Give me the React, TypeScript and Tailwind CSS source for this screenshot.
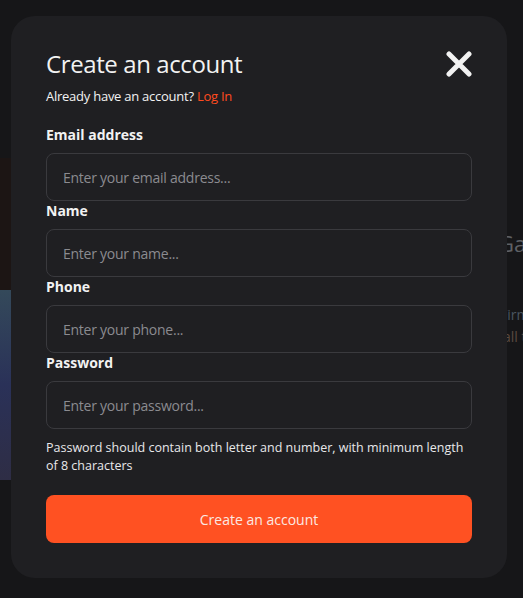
import React from 'react';

const fields = [
  { label: 'Email address', placeholder: 'Enter your email address...', type: 'email' },
  { label: 'Name', placeholder: 'Enter your name...', type: 'text' },
  { label: 'Phone', placeholder: 'Enter your phone...', type: 'tel' },
  { label: 'Password', placeholder: 'Enter your password...', type: 'password' },
];

function CloseIcon() {
  return (
    <svg width="26" height="26" viewBox="0 0 26 26" fill="none">
      <path d="M3 3L23 23M23 3L3 23" stroke="#f2f2f2" strokeWidth="5" strokeLinecap="round" />
    </svg>
  );
}

export default function App() {
  return (
    <div
      className="relative h-[598px] w-[523px] overflow-hidden bg-[#161618]"
      style={{ fontFamily: '"Open Sans", "Noto Sans", sans-serif' }}
    >
      {/* page behind the dialog */}
      <div className="flex pt-[158px]">
        <div className="flex w-[260px] shrink-0 flex-col">
          <div className="h-[132px] bg-[#1c1514]" />
          <div className="h-[190px] bg-gradient-to-b from-[#34495a] via-[#2a3158] to-[#2e2d45]" />
        </div>
        <div className="ml-[238px] flex shrink-0 flex-col pt-[70px]">
          <div className="whitespace-nowrap text-[22px] leading-[30px] text-[#5e6065]">Gaming</div>
          <div className="mt-[46px] whitespace-nowrap pl-[2px] text-[14px] leading-[22px] text-[#4a5560]">Firm platform</div>
          <div className="whitespace-nowrap pl-[5px] text-[14px] leading-[22px] text-[#5a4a40]">all the best</div>
        </div>
      </div>

      {/* dialog */}
      <div className="absolute left-[11px] top-[16px] w-[496px] rounded-[24px] bg-[#1f1f22] px-[35px] pb-[35px] pt-[32px]">
        <div className="flex items-start justify-between">
          <h1 className="text-[24px] leading-[32px] tracking-[-0.4px] text-[#f2f2f2]">Create an account</h1>
          <button className="mt-[3px]">
            <CloseIcon />
          </button>
        </div>
        <p className="mt-[7px] text-[13px] leading-[18px] tracking-[-0.25px] text-[#f2f2f2]">
          Already have an account? <span className="text-[#ff4b1f]">Log In</span>
        </p>

        <div className="mt-[20px] flex flex-col">
          {fields.map((f) => (
            <label key={f.label} className="flex flex-col">
              <span className="text-[14px] font-bold leading-[20px] text-[#f2f2f2]">{f.label}</span>
              <input
                type={f.type}
                placeholder={f.placeholder}
                className="mt-[8px] h-[48px] rounded-[8px] border border-[#3a3a3e] bg-[#1f1f22] px-[16px] text-[14px] tracking-[-0.25px] text-[#f2f2f2] outline-none placeholder:text-[#8b8b90]"
              />
            </label>
          ))}
        </div>

        <p className="mt-[10px] text-[12.5px] leading-[18px] text-[#e8e8ea]">
          Password should contain both letter and number, with minimum length of 8 characters
        </p>

        <button className="mt-[20px] h-[48px] w-full rounded-[8px] bg-[#ff5122] text-[14px] text-[#fbe9e3]">
          Create an account
        </button>
      </div>
    </div>
  );
}
